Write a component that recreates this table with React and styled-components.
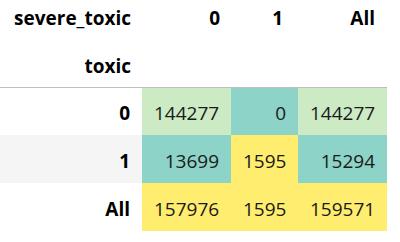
import React from "react";
import styled, { createGlobalStyle } from "styled-components";

const Global = createGlobalStyle`
  html, body { margin: 0; padding: 0; background: #fff; }
  body { font-family: "Open Sans", "Noto Sans", sans-serif; }
`;

const Table = styled.table`
  border-collapse: collapse;
  border-spacing: 0;
  table-layout: fixed;
  width: 387px;
  font-size: 19px;
  color: #111;
`;

const HeadRow = styled.tr`
  height: ${(p) => p.$h}px;
`;

const HeadCell = styled.th`
  font-weight: 700;
  text-align: right;
  padding: ${(p) => p.$pad || "0 12px"};
  vertical-align: middle;
  color: #000;
  white-space: nowrap;
`;

const Head = styled.thead`
  border-bottom: 1px solid #bdbdbd;
`;

const BodyRow = styled.tr`
  height: 48px;
  background: ${(p) => (p.$odd ? "#f5f5f5" : "transparent")};
`;

const IndexCell = styled.th`
  font-weight: 700;
  text-align: right;
  padding: 4px 12px 0 12px;
  color: #000;
`;

const Cell = styled.td`
  text-align: right;
  padding: 4px 12px 0 12px;
  background: ${(p) => p.$bg};
  color: #1a1a1a;
`;

const COLORS = {
  g: "#ccebc5",
  t: "#8dd3c7",
  y: "#ffed6f",
};

const rows = [
  { idx: "0", cells: [["144277", "g"], ["0", "t"], ["144277", "g"]] },
  { idx: "1", cells: [["13699", "t"], ["1595", "y"], ["15294", "t"]] },
  { idx: "All", cells: [["157976", "y"], ["1595", "y"], ["159571", "y"]] },
];

export default function App() {
  return (
    <>
      <Global />
      <Table>
        <colgroup>
          <col style={{ width: 142 }} />
          <col style={{ width: 89 }} />
          <col style={{ width: 67 }} />
          <col style={{ width: 89 }} />
        </colgroup>
        <Head>
          <HeadRow $h={37}>
            <HeadCell $pad="0 11px 2px 12px">severe_toxic</HeadCell>
            <HeadCell $pad="0 11px 2px 12px">0</HeadCell>
            <HeadCell $pad="0 15px 2px 12px">1</HeadCell>
            <HeadCell $pad="0 12px 2px 12px">All</HeadCell>
          </HeadRow>
          <HeadRow $h={50}>
            <HeadCell $pad="8px 11px 0 12px">toxic</HeadCell>
            <HeadCell />
            <HeadCell />
            <HeadCell />
          </HeadRow>
        </Head>
        <tbody>
          {rows.map((r, i) => (
            <BodyRow key={r.idx} $odd={i === 1}>
              <IndexCell>{r.idx}</IndexCell>
              {r.cells.map(([v, c], j) => (
                <Cell key={j} $bg={COLORS[c]}>
                  {v}
                </Cell>
              ))}
            </BodyRow>
          ))}
        </tbody>
      </Table>
    </>
  );
}
